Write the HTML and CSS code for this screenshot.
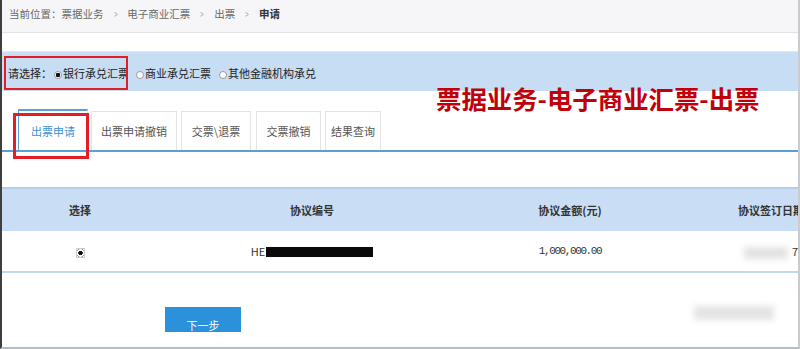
FILE: index.html
```html
<!DOCTYPE html>
<html lang="zh-CN">
<head>
    <meta charset="UTF-8">
    <meta name="viewport" content="width=device-width, initial-scale=1.0">
    <title>电子商业汇票 - 出票申请</title>
    <link rel="stylesheet" href="styles.css">
</head>
<body>
    <div class="page">
        <div class="crumbs">
            当前位置：票据业务<span class="sep">&gt;</span>电子商业汇票<span class="sep">&gt;</span>出票<span class="sep">&gt;</span><b>申请</b>
        </div>

        <div class="choose">
            <label class="pick">请选择：<input type="radio" name="kind" checked>银行承兑汇票</label>
            <label class="opt"><input type="radio" name="kind">商业承兑汇票</label>
            <label class="opt"><input type="radio" name="kind">其他金融机构承兑</label>
        </div>

        <h2 class="banner">票据业务-电子商业汇票-出票</h2>

        <ul class="tabs">
            <li class="tab active">出票申请</li>
            <li class="tab t2">出票申请撤销</li>
            <li class="tab t3">交票\退票</li>
            <li class="tab t4">交票撤销</li>
            <li class="tab t5">结果查询</li>
        </ul>
        <div class="tab-mark"></div>

        <table class="list">
            <colgroup>
                <col style="width:156px">
                <col style="width:308px">
                <col style="width:208px">
                <col style="width:194px">
            </colgroup>
            <thead>
                <tr>
                    <th>选择</th>
                    <th>协议编号</th>
                    <th>协议金额(元)</th>
                    <th>协议签订日期</th>
                </tr>
            </thead>
            <tbody>
                <tr>
                    <td><input type="radio" class="row-radio" checked></td>
                    <td>HE<span class="mask"></span></td>
                    <td class="num">1,000,000.00</td>
                    <td class="date"><span class="fuzz"></span>7</td>
                </tr>
            </tbody>
        </table>

        <div class="actions">
            <button class="next">下一步</button>
        </div>

        <div class="smudge"></div>
    </div>
</body>
</html>
```

FILE: styles.css
```css
body {
    margin: 0;
    font-family: "Noto Sans CJK SC", "Noto Sans", sans-serif;
    color: #333;
    background: #fff;
}

.page {
    position: relative;
    width: 800px;
    height: 349px;
    box-sizing: border-box;
    border-left: 2px solid #3f3f3f;
    border-right: 2px solid #c9cbd0;
    border-bottom: 2px solid #b7bcc5;
    overflow: hidden;
}

/* breadcrumb */
.crumbs {
    height: 33px;
    box-sizing: border-box;
    padding-left: 7px;
    line-height: 27px;
    font-size: 10.5px;
    color: #666;
    background: #f6f6f9;
    border-bottom: 1px solid #e1e3ea;
}

.crumbs .sep {
    display: inline-block;
    margin: 0 9px;
    color: #999;
    transform: scaleX(0.6);
}

.crumbs b {
    color: #333;
}

/* bill kind selection */
.choose {
    display: flex;
    align-items: center;
    height: 40px;
    box-sizing: border-box;
    margin-top: 18px;
    padding-top: 3px;
    background: #c7ddf3;
    border-top: 1px solid #dfe9f3;
    font-size: 11px;
    color: #222;
}

.choose input {
    appearance: none;
    width: 8px;
    height: 8px;
    margin: 0 1px 0 0;
    border: 1px solid #9a9a9a;
    border-radius: 50%;
    background: #fff;
    vertical-align: -1px;
}

.choose input:checked {
    background: radial-gradient(circle, #111 0 2px, #fff 2.5px);
}

.pick {
    width: 124px;
    height: 34px;
    box-sizing: border-box;
    margin-left: 2px;
    padding-left: 2px;
    border: 2px solid #e21d25;
    line-height: 30px;
    white-space: nowrap;
    overflow: hidden;
}

.pick input {
    margin-left: 2px;
}

.opt {
    margin-left: 8px;
}

.banner {
    position: absolute;
    left: 434px;
    top: 83px;
    margin: 0;
    font-size: 25.4px;
    line-height: 30px;
    font-weight: bold;
    color: #c1000a;
    white-space: nowrap;
}

/* tabs */
.tabs {
    display: flex;
    align-items: flex-end;
    height: 42px;
    box-sizing: border-box;
    margin: 19px 0 0;
    padding: 0 0 0 16px;
    list-style: none;
    border-bottom: 2px solid #5a9fd6;
}

.tab {
    height: 39px;
    box-sizing: border-box;
    text-align: center;
    line-height: 38px;
    font-size: 11px;
    color: #555;
    border: 1px solid #e3e3e3;
    border-bottom: none;
    background: #fff;
}

.tab.active {
    width: 70px;
    height: 41px;
    line-height: 40px;
    color: #3b93d0;
    border-top: 2px solid #5a9fd6;
    border-left: 1px solid #5a9fd6;
}

.tab.t2 { width: 86px; margin-left: 3px; }
.tab.t3 { width: 70px; margin-left: 4px; }
.tab.t4 { width: 65px; margin-left: 5px; }
.tab.t5 { width: 56px; margin-left: 4px; }

.tab-mark {
    position: absolute;
    left: 11px;
    top: 113px;
    width: 76px;
    height: 46px;
    box-sizing: border-box;
    border: 3px solid #e21d25;
}

/* list */
.list {
    width: 866px;
    margin-top: 35px;
    border-collapse: collapse;
    table-layout: fixed;
    font-size: 11px;
}

.list thead tr {
    border-top: 2px solid #b3cfea;
}

.list th {
    height: 40px;
    background: #c9def4;
    font-weight: bold;
    color: #333;
    white-space: nowrap;
}

.list tbody tr {
    border-bottom: 2px solid #c5d9ec;
}

.list td {
    height: 38px;
    text-align: center;
    color: #333;
}

.row-radio {
    appearance: none;
    width: 9px;
    height: 10px;
    margin: 0;
    border: 1px solid #ccc;
    background: radial-gradient(circle, #111 0 2px, #fff 2.5px 3.5px, #888 4px, #fff 4.5px);
    vertical-align: middle;
}

.mask {
    display: inline-block;
    width: 107px;
    height: 10px;
    margin-left: 1px;
    background: #0a0a0a;
    vertical-align: -1px;
}

.num {
    font-family: "Liberation Mono", monospace;
    letter-spacing: -1.4px;
}

.date {
    text-align: right !important;
    padding-right: 70px;
}

.fuzz {
    display: inline-block;
    width: 44px;
    height: 12px;
    margin-right: 4px;
    background: #e2e2e2;
    filter: blur(3px);
    vertical-align: middle;
}

/* next step */
.actions {
    margin-top: 34px;
    padding-left: 163px;
}

.next {
    display: block;
    width: 76px;
    height: 25px;
    padding: 12px 0 0;
    border: none;
    background: #2a91da;
    color: #fff;
    font-family: inherit;
    font-size: 11px;
    line-height: 13px;
    overflow: hidden;
}

.smudge {
    position: absolute;
    left: 692px;
    top: 306px;
    width: 80px;
    height: 14px;
    background: #e4e4e4;
    filter: blur(3px);
}
```
